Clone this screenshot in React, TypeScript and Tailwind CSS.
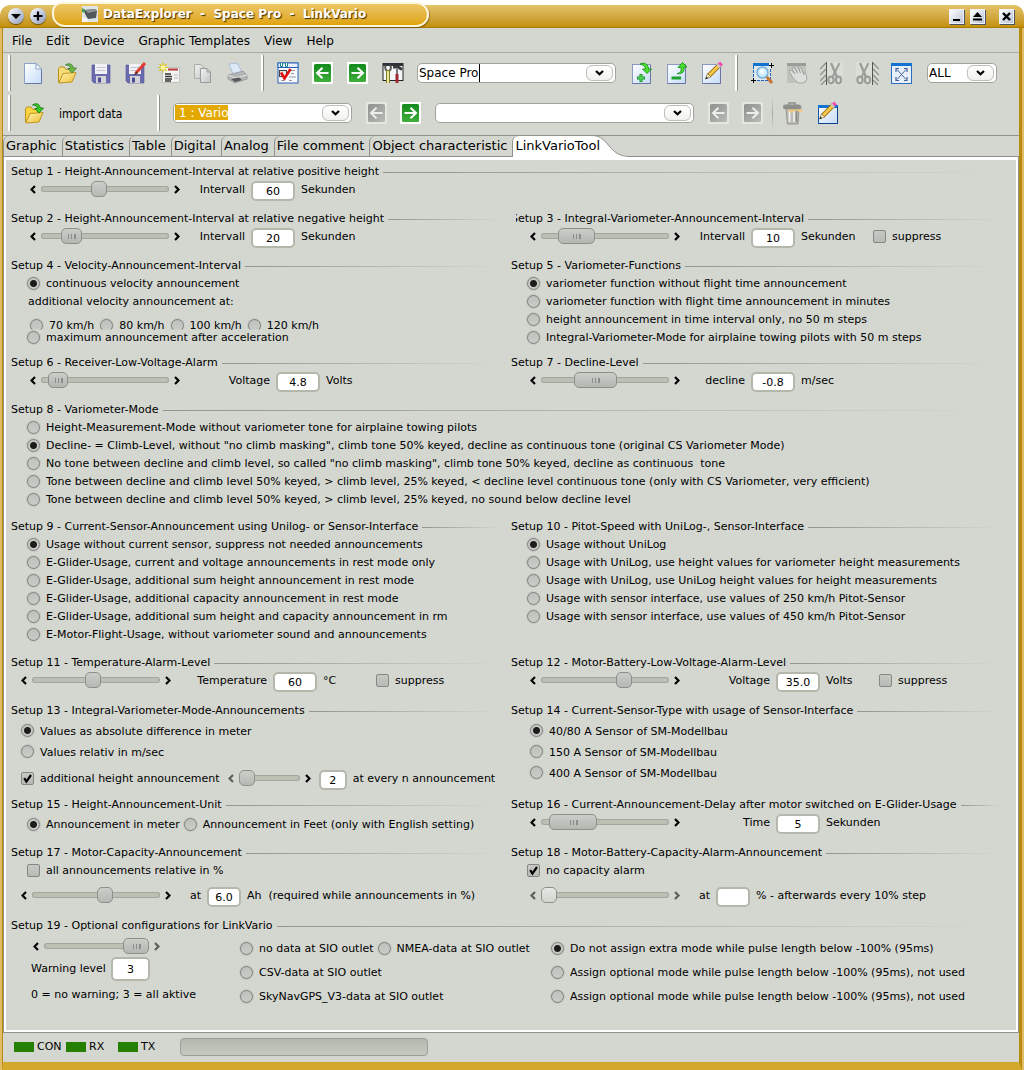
import React, { useId } from "react";

type Kids = { children?: React.ReactNode };

/* ---------- form pieces ---------- */

function Chevron({ dir, dim }: { dir: "left" | "right"; dim?: boolean }) {
  return (
    <svg width="6" height="9" viewBox="0 0 6 9" className="block">
      <path
        d={dir === "left" ? "M5 1 L1.5 4.5 L5 8" : "M1 1 L4.5 4.5 L1 8"}
        fill="none"
        stroke={dim ? "#5c5e5a" : "#000"}
        strokeWidth="2.2"
      />
    </svg>
  );
}

type SliderProps = {
  label: string;
  value: number;
  track?: string;
  thumb?: string;
  atStart?: boolean;
  atEnd?: boolean;
  disabled?: boolean;
};

const GRIP =
  "[&::-webkit-slider-thumb]:bg-[linear-gradient(90deg,transparent_0_1px,#8b8e88_1px_2px,transparent_2px_4px,#8b8e88_4px_5px,transparent_5px_7px,#8b8e88_7px_8px),linear-gradient(#cbcdc8,#b4b6b1)] [&::-webkit-slider-thumb]:bg-[length:9px_5px,100%_100%] [&::-webkit-slider-thumb]:bg-center [&::-webkit-slider-thumb]:bg-no-repeat";
const PLAIN = "[&::-webkit-slider-thumb]:w-4 [&::-webkit-slider-thumb]:bg-[linear-gradient(#cbcdc8,#b6b8b3)]";
const PALE = "[&::-webkit-slider-thumb]:w-4 [&::-webkit-slider-thumb]:bg-[linear-gradient(#e6e8e3,#d2d5ce)]";

function Slider({ label, value, track = "w-32", thumb = PLAIN, atStart, atEnd, disabled }: SliderProps) {
  return (
    <div className="flex h-[18px] shrink-0 items-center">
      <button type="button" aria-label={label + " down"} className="flex w-[11px] justify-start">
        <Chevron dir="left" dim={atStart || disabled} />
      </button>
      <input
        type="range"
        aria-label={label}
        min={0}
        max={1000}
        defaultValue={value}
        disabled={disabled}
        className={
          "h-[6px] appearance-none rounded-[3px] bg-[#bcbfb3] shadow-[inset_0_0_0_1px_#a3a69c] [&::-webkit-slider-thumb]:h-[16px] [&::-webkit-slider-thumb]:appearance-none [&::-webkit-slider-thumb]:rounded-[5px] [&::-webkit-slider-thumb]:border [&::-webkit-slider-thumb]:border-[#8d908a] " +
          track +
          " " +
          thumb
        }
      />
      <button type="button" aria-label={label + " up"} className="flex w-[11px] justify-end">
        <Chevron dir="right" dim={atEnd || disabled} />
      </button>
    </div>
  );
}

type RadioProps = { name: string; on?: boolean; flat?: boolean };

function Radio({ name, on, flat, children }: RadioProps & Kids) {
  return (
    <label className="flex h-[18px] items-center gap-1.5 whitespace-pre">
      <input
        type="radio"
        name={name}
        defaultChecked={on}
        className={
          "size-[13px] shrink-0 appearance-none rounded-full border border-[#7d807a] bg-[linear-gradient(#bfc1bc,#c9cbc6)] shadow-[0_0_0_1px_#c6c9c1] checked:bg-[radial-gradient(circle,#1c1d1b_0_3px,#c6c8c3_4px)] " +
          (flat ? "[clip-path:inset(-1px_-1px_2px_-1px)]" : "")
        }
      />
      <span className="pt-[2px]">{children}</span>
    </label>
  );
}

function Check({ on, children }: { on?: boolean } & Kids) {
  return (
    <label className="flex h-[18px] items-center gap-1.5 whitespace-pre">
      <span className="relative size-[13px] shrink-0">
        <input
          type="checkbox"
          defaultChecked={on}
          className="peer block size-[13px] appearance-none rounded-[2px] border border-[#858882] bg-[linear-gradient(#c6c8c3,#b8bab5)]"
        />
        <svg
          viewBox="0 0 13 13"
          className="pointer-events-none absolute inset-0 hidden size-[13px] peer-checked:block"
        >
          <path d="M3.2 6.2 L5.4 9.6 L10 3" fill="none" stroke="#000" strokeWidth="2.2" />
        </svg>
      </span>
      <span className="pt-[2px]">{children}</span>
    </label>
  );
}

type FieldProps = { label: string; value: string; labelW: string; unit: string; unitW?: string; inputW?: string };

function Field({ label, value, labelW, unit, unitW = "", inputW = "w-11" }: FieldProps) {
  const id = useId();
  return (
    <>
      <label htmlFor={id} className={"shrink-0 pt-[2px] text-right whitespace-pre " + labelW}>
        {label}
      </label>
      <input
        id={id}
        defaultValue={value}
        className={
          "mt-1 ml-1.5 h-5 shrink-0 rounded-[5px] border-2 border-[#b4b8ac] bg-white text-center text-[11px] text-black outline-none " +
          inputW
        }
      />
      <span className={"ml-1.5 shrink-0 pt-[2px] whitespace-pre " + unitW}>{unit}</span>
    </>
  );
}

function Group({ title, clip, full, children }: { title: string; clip?: boolean; full?: boolean } & Kids) {
  return (
    <section className={full ? "col-span-2" : ""}>
      <div className="flex h-[18px] items-center gap-1">
        <h2 className={"pt-[2px] whitespace-pre " + (clip ? "[clip-path:inset(0_0_0_5px)]" : "")}>{title}</h2>
        <div className="mt-[3px] mr-3 h-px flex-1 bg-linear-to-r from-[#92958e] to-[#92958e]/0" />
      </div>
      {children}
    </section>
  );
}

function Line({ pad = "pl-[19px]", children }: { pad?: string } & Kids) {
  return <div className={"flex h-[18px] items-center " + pad}>{children}</div>;
}

function Row({ h, children }: { h: string } & Kids) {
  return <div className={"grid grid-cols-2 " + h}>{children}</div>;
}

/* ---------- toolbar pieces ---------- */

const W = "w-[34px]";
const W2 = "w-[35px]";

function Tool({ label, w, children }: { label: string; w: string } & Kids) {
  return (
    <button type="button" aria-label={label} className={"flex h-6 shrink-0 items-center justify-center " + w}>
      {children}
    </button>
  );
}

function Sep() {
  return <div className="h-9 w-[3px] shrink-0 border-l-2 border-white bg-[#8f928b]" />;
}

function Svg({ children }: Kids) {
  return (
    <svg width="24" height="24" viewBox="0 0 24 24" className="block">
      {children}
    </svg>
  );
}

function Defs() {
  return (
    <svg width="0" height="0" className="absolute">
      <defs>
        <linearGradient id="page" x1="0" y1="0" x2="1" y2="1">
          <stop offset="0" stopColor="#fff" />
          <stop offset="1" stopColor="#c4dcf8" />
        </linearGradient>
        <linearGradient id="gray" x1="0" y1="0" x2="1" y2="1">
          <stop offset="0" stopColor="#f2f2f2" />
          <stop offset="1" stopColor="#c2c4c4" />
        </linearGradient>
        <linearGradient id="fold" x1="0" y1="0" x2="1" y2="1">
          <stop offset="0" stopColor="#fff3b8" />
          <stop offset="1" stopColor="#f0c030" />
        </linearGradient>
        <linearGradient id="green" x1="0" y1="0" x2="0" y2="1">
          <stop offset="0" stopColor="#128a1c" />
          <stop offset="1" stopColor="#3fae3a" />
        </linearGradient>
        <linearGradient id="off" x1="0" y1="0" x2="1" y2="1">
          <stop offset="0" stopColor="#8e908c" />
          <stop offset="1" stopColor="#b9bbb7" />
        </linearGradient>
      </defs>
    </svg>
  );
}

function PageIcon() {
  return (
    <Svg>
      <path d="M3.5 2.5 H15 L20.5 8 V22.5 H3.5 Z" fill="url(#page)" stroke="#8aa0c8" />
      <path d="M15 2.5 V8 H20.5 Z" fill="#fff" stroke="#8aa0c8" />
      <path d="M4 22.5 H20.5 V9" fill="none" stroke="#6878a8" />
    </Svg>
  );
}

function FolderIcon({ strong }: { strong?: boolean }) {
  return (
    <Svg>
      <path d="M3.5 21 V7.5 L5 6 H9 L11 8.5 H17.5 V12" fill={strong ? "#f9d440" : "#f7dc78"} stroke="#b98f1c" />
      <path d="M3.8 22 L8 12.5 L21 11.5 L17 21 Z" fill="url(#fold)" stroke="#c09420" />
      <path
        d="M10.5 4 C14 1.5 18 3 18.2 7 H21.5 L17 12 L12.8 7.5 H15.5 C15.5 5 13.5 4 10.5 4 Z"
        fill={strong ? "#37d026" : "#6fb843"}
        stroke={strong ? "#157a14" : "#44803a"}
        strokeWidth="0.9"
      />
    </Svg>
  );
}

function SaveIcon({ pen }: { pen?: boolean }) {
  return (
    <Svg>
      <path d="M3 4 H21 V22 H5 L3 20 Z" fill="#6a6cae" stroke="#5052a0" strokeWidth="0.6" />
      <rect x="6" y="3" width="12" height="10" fill="#f2f2f6" />
      <path d="M7.5 6.5 H16.5 M7.5 9.5 H16.5" stroke="#c4c4cc" />
      <rect x="7" y="15" width="10" height="7" fill="#d4d4d8" />
      <rect x="9" y="16.5" width="3" height="5" fill="#4b4d92" />
      {pen && (
        <>
          <path d="M22 2 L12.5 12.5" stroke="#e03c30" strokeWidth="3" />
          <path d="M13.5 10.5 L10.5 14.5 L14.5 12.5 Z" fill="#333" />
        </>
      )}
    </Svg>
  );
}

function CardIcon() {
  return (
    <Svg>
      <rect x="5.5" y="6.5" width="17" height="15" fill="#f4f4f2" stroke="#c0c0be" />
      <path d="M11 8.5 H21" stroke="#b83a3a" strokeWidth="2" />
      <path d="M8 13 H14 M8 15.5 H15 M8 18 H15 M8 20 H14" stroke="#333" strokeWidth="1.5" />
      <path d="M17 14 H21 M17 17 H21" stroke="#b4b4b4" />
      <path d="M6 1.500 V11.500 M1 6.500 H11 M2.500 3 L9.500 10 M9.500 3 L2.500 10" stroke="#d8c018" strokeWidth="1.200" />
      <circle cx="6" cy="6.5" r="2.2" fill="#fff8a0" />
    </Svg>
  );
}

function CopyIcon() {
  return (
    <Svg>
      <path d="M3.5 3.5 H10 L13.5 7 V17.5 H3.5 Z" fill="url(#gray)" stroke="#a8aaa8" />
      <path d="M9.5 7.5 H16 L19.5 11 V21.5 H9.5 Z" fill="url(#gray)" stroke="#989a98" />
      <path d="M16 7.5 V11 H19.5" fill="none" stroke="#989a98" />
    </Svg>
  );
}

function PrinterIcon() {
  return (
    <Svg>
      <path d="M4 3 L12 2 L17 11 L8 13 Z" fill="#dce9f7" stroke="#9fb6d4" strokeWidth="0.8" />
      <path d="M3 14 L18 10 L22 14 L22 18 L10 22 L3 18 Z" fill="#b4b5b6" stroke="#8d8e90" strokeWidth="0.7" />
      <path d="M3 14 L10 17 L22 14" fill="none" stroke="#e4e4e4" />
      <path d="M6 18 L14 16.5 L17 19 L10 21 Z" fill="#55575a" />
    </Svg>
  );
}

function ChecklistIcon() {
  return (
    <Svg>
      <rect x="2" y="2" width="20" height="20" fill="#f8fafd" stroke="#2a62b8" />
      <rect x="2" y="2" width="20" height="4.5" fill="#e6eefa" stroke="#2a62b8" />
      <path d="M4.5 2 V5.500 H6.500 V2 M9.500 2 V5.500 H11.500 V2" fill="#fff" stroke="#16888a" />
      <path d="M13 9.5 H19 M15 12.500 H18 M13 16 H20 M5 19.500 H8 M13 19.500 H16" stroke="#999" />
      <rect x="3.5" y="9.5" width="7" height="6" fill="#e6e6e6" stroke="#444" />
      <path d="M5 11.500 L8.500 17.500 L14.500 8" fill="none" stroke="#e01010" strokeWidth="2.6" />
    </Svg>
  );
}

function ArrowIcon({ dir, off }: { dir: "left" | "right"; off?: boolean }) {
  return (
    <Svg>
      <rect x="1" y="1" width="21" height="22" fill={off ? "#e4e6e1" : "#fff"} />
      <rect x="3" y="3" width="17" height="18" rx="1.5" fill={off ? "url(#off)" : "url(#green)"} />
      <path
        d={dir === "left" ? "M17.5 12 H6.5 M11.5 6.8 L6 12 L11.5 17.2" : "M5.5 12 H16.5 M11.5 6.8 L17 12 L11.5 17.2"}
        fill="none"
        stroke={off ? "#eceeea" : "#fff"}
        strokeWidth="2"
      />
    </Svg>
  );
}

function ToolsIcon() {
  return (
    <Svg>
      <rect x="2" y="2.5" width="20" height="17" fill="#f4f6f8" stroke="#222" />
      <rect x="2" y="2" width="20" height="3" fill="#2c3338" />
      <path d="M5 4 C3 7 5 10 7 10 C9.5 10 11 7 9 4" fill="none" stroke="#555" strokeWidth="2" />
      <path d="M7 9 V22" stroke="#7e7c2a" strokeWidth="4" />
      <path d="M7 10 V22" stroke="#ecea96" strokeWidth="2" />
      <path d="M12 6 H17 L21 8.5" fill="none" stroke="#3b3b3b" strokeWidth="3" />
      <path d="M16 8 V13" stroke="#777" strokeWidth="2" />
      <path d="M16 13 V22" stroke="#a02632" strokeWidth="3" />
    </Svg>
  );
}

function ObjectIcon({ kind }: { kind: "add" | "remove" | "edit" }) {
  return (
    <Svg>
      <rect x="2.5" y="3.5" width="18" height="19" fill="url(#page)" stroke="#8a98c4" />
      <path d="M2.5 22.5 H20.5 V4" fill="none" stroke="#6a74a8" />
      {kind === "add" && (
        <>
          <path d="M11 13 V21 M7 17 H15" stroke="#148a2c" strokeWidth="3" />
          <path d="M11 13.8 V20.2 M7.8 17 H14.2" stroke="#50dc50" strokeWidth="1.4" />
          <path d="M10 3 C14 1 18.5 3 18.5 8 H21.5 L17 12.5 L12.5 8 H15.5 C15.5 5 13 4 10 3 Z" fill="#4be02c" stroke="#16901c" strokeWidth="0.9" />
        </>
      )}
      {kind === "remove" && (
        <>
          <path d="M6.5 17 H16" stroke="#1da02c" strokeWidth="3" />
          <path d="M12 12.5 C16 12.5 16.5 9 16 6.5 H13 L17.5 1.5 L22 6 H19 C19.5 10 18 13.5 12 12.5 Z" fill="#4be02c" stroke="#16901c" strokeWidth="0.9" />
        </>
      )}
      {kind === "edit" && <Pencil />}
    </Svg>
  );
}

function Pencil() {
  return (
    <>
      <path d="M19.5 4 L9 14.5" stroke="#a07014" strokeWidth="4.6" />
      <path d="M19.5 4 L9 14.5" stroke="#f6c84c" strokeWidth="3" />
      <path d="M18 5.5 L19.5 4" stroke="#c8c8d0" strokeWidth="4.2" />
      <path d="M19.5 4 L21.5 2" stroke="#f04cb0" strokeWidth="4" />
      <path d="M7.5 12.5 L5.5 18 L11 16 Z" fill="#f6e2b4" stroke="#6a5a30" strokeWidth="0.6" />
      <path d="M6.5 15.5 L5.3 18.2 L8 17.2 Z" fill="#222" />
    </>
  );
}

function ZoomIcon() {
  return (
    <Svg>
      <rect x="3" y="2" width="18" height="17" fill="#dfe8ee" />
      <rect x="3" y="2" width="16" height="3" fill="#1274d0" />
      <path d="M3.5 5 V17 M7 19.5 H21 M20.5 8 V19" stroke="#1c66c0" strokeDasharray="3 1" />
      <path d="M19 4.5 H24 M21.5 2 V7 M1 19.5 H6 M3.5 17 V22" stroke="#000" />
      <path d="M16 15 L22 22" stroke="#c87434" strokeWidth="3" />
      <circle cx="12.500" cy="11.5" r="5.500" fill="#c8ecfc" stroke="#7ab0d8" strokeWidth="1.5" />
      <circle cx="12" cy="10.5" r="2.5" fill="#f2fcff" />
    </Svg>
  );
}

function HandIcon() {
  return (
    <Svg>
      <rect x="2" y="2" width="19" height="20" fill="#c0c2bd" />
      <rect x="2" y="2" width="19" height="3" fill="#9b9d99" />
      <path
        d="M6 9 L10 13 L7 7 Q8 5.5 9.5 7 L12.5 12 L10 5.5 Q11.5 4 12.5 6 L15.5 12 L13.500 6 Q15 5 16 7 L19 14 L19 11 Q21 10.5 21 13 L22 18 L19 22 H13 L8 17 L4.5 11 Q4 9 6 9 Z"
        fill="#dcdeda"
        stroke="#9fa19d"
        strokeWidth="0.9"
      />
    </Svg>
  );
}

function CutIcon({ side }: { side: "left" | "right" }) {
  const left = side === "left";
  return (
    <Svg>
      <rect x={left ? 7 : 1} y="1" width="16" height="23" fill="#dcdfd8" />
      <path
        d={left ? "M0 8 L6 2 M0 14 L6 8 M0 20 L6 14 M1 24 L6 19" : "M18 2 L24 8 M18 8 L24 14 M18 14 L24 20 M18 19 L23 24"}
        stroke="#8a8c88"
        strokeWidth="1.2"
      />
      <path d={left ? "M6.5 1 V24" : "M17.5 1 V24"} stroke="#555" />
      <g transform={left ? "translate(6 0)" : "translate(0 0)"} fill="none" stroke="#9c9e9a">
        <path d="M5 2 L11 16" strokeWidth="2.4" />
        <path d="M13.5 2 L6.5 16" strokeWidth="2" />
        <ellipse cx="5" cy="19" rx="2.6" ry="3.3" strokeWidth="2.2" />
        <ellipse cx="12.500" cy="19" rx="2.6" ry="3.3" strokeWidth="2.2" />
      </g>
    </Svg>
  );
}

function FitIcon() {
  return (
    <Svg>
      <rect x="1.5" y="2.5" width="20" height="20" fill="#e6effa" stroke="#2a6cc0" />
      <rect x="1" y="2" width="21" height="3" fill="#1274d0" />
      <path d="M7 8.5 L16 18.5 M16 8.5 L7 18.5" stroke="#455f90" />
      <path d="M6 11 V7.5 H9 M14 7.5 H17 V11 M17 16 V19.5 H14 M9 19.5 H6 V16" fill="none" stroke="#455f90" strokeWidth="1.2" />
    </Svg>
  );
}

function TrashIcon() {
  return (
    <Svg>
      <path d="M5 8 H18 L17 23 H6.5 Z" fill="#bcbcb8" stroke="#94948f" />
      <path d="M8.5 10 V21 M13 10 V21" stroke="#ececea" strokeWidth="1.8" />
      <path d="M15.5 10 V21" stroke="#8a8682" strokeWidth="1.5" />
      <path d="M2 4.500 L4 3.500 H18 L20 4.500 L20.500 8 H2.500 Z" fill="#8f8f8b" />
      <path d="M8 4 V2 H14 V4" fill="none" stroke="#8c8c88" strokeWidth="1.5" />
      <path d="M6 8.500 H22 L20 11.500 L15 9.500 L10 12 Z" fill="#f0c880" />
    </Svg>
  );
}

function NoteIcon() {
  return (
    <Svg>
      <rect x="2.5" y="4.5" width="19" height="18" fill="url(#page)" stroke="#1858a8" />
      <rect x="2" y="4" width="20" height="3" fill="#1274d0" />
      <path d="M2.5 22.5 H21.5 V6" fill="none" stroke="#10408c" />
      <g transform="translate(-2 0)">
        <Pencil />
      </g>
    </Svg>
  );
}

function DropFace() {
  return (
    <span className="pointer-events-none absolute top-[2px] right-[3px] bottom-[2px] flex w-[27px] items-center justify-center rounded-[6px] border border-[#bcc0b6] bg-linear-to-b from-white to-[#f1f2ef]">
      <svg width="9" height="6" viewBox="0 0 9 6">
        <path d="M1 1 L4.5 4.3 L8 1" fill="none" stroke="#000" strokeWidth="2.2" />
      </svg>
    </span>
  );
}

const BOX = "h-5 w-full appearance-none rounded-[5px] border border-[#a0a49a] bg-white text-[12px] outline-none";

/* ---------- page ---------- */

const MENU = ["File", "Edit", "Device", "Graphic Templates", "View", "Help"];
const TABS = ["Graphic", "Statistics", "Table", "Digital", "Analog", "File comment", "Object characteristic"];

function TitleBar() {
  return (
    <header className="relative flex h-7 items-start bg-white">
      <div className="absolute inset-x-0 top-[5px] bottom-0 rounded-t-[10px] border-b border-[#a87c00] bg-linear-to-b from-[#e3c468] to-[#c49000]" />
      <div className="relative flex h-7 w-full items-center">
        <div className="flex w-[52px] gap-[6px] pt-1 pl-2">
          {["Window menu", "Keep on all desktops"].map((name, i) => (
            <button
              key={name}
              type="button"
              aria-label={name}
              className="flex size-4 items-center justify-center rounded-full bg-linear-to-br from-white to-[#8d9cbc] shadow-[0_1px_1px_#00000080]"
            >
              <svg width="10" height="10" viewBox="0 0 10 10">
                {i === 0 ? <path d="M0 3 H10 L5 8 Z" /> : <path d="M5 0.5 V9.5 M0.5 5 H9.5" stroke="#000" strokeWidth="2.2" />}
              </svg>
            </button>
          ))}
        </div>
        <div className="flex h-[25px] w-[377px] items-center gap-[5px] rounded-[13px] rounded-tl-[10px] border-2 border-[#fdf6df] bg-linear-to-b from-[#ecc662] to-[#dfa400] pl-[28px] shadow-[1px_1px_1px_#00000050]">
          <svg width="16" height="16" viewBox="0 0 16 16" className="shrink-0">
            <rect width="16" height="16" fill="#dfe5e6" />
            <path d="M0 2 L4 4 L3 7 L0 6 Z" fill="#4d9b58" />
            <path d="M3 4 L13 3 L15 5 L14 12 L6 13 L3 8 Z" fill="#52585a" />
            <path d="M3 4 L13 3 L15 5 L6 7 Z" fill="#8b9294" />
            <path d="M0 11 L6 13 L5 16 H0 Z" fill="#f4f6f6" />
          </svg>
          <h1 className="text-[12px] font-bold whitespace-pre text-white [text-shadow:1px_1px_1px_#3a2c00]">
            {"DataExplorer  -  Space Pro  -  LinkVario"}
          </h1>
        </div>
        <div className="flex-1" />
        <div className="flex items-center gap-[6px] pt-1 pr-[10px]">
          {["Minimize", "Maximize", "Close"].map((name, i) => (
            <button
              key={name}
              type="button"
              aria-label={name}
              className={
                "flex size-[15px] items-center justify-center border border-[#eef2f8] bg-linear-to-br from-white to-[#b9c4d6] shadow-[1px_1px_0_#4a5568] " +
                (i === 2 ? "ml-2" : "")
              }
            >
              <svg width="11" height="11" viewBox="0 0 11 11">
                {i === 0 && <path d="M2 8 H9 V10 H2 Z" />}
                {i === 1 && <path d="M5.5 1 L10 6 H1 Z M1 7.5 H10 V9.5 H1 Z" />}
                {i === 2 && <path d="M2 2 L9 9 M9 2 L2 9" stroke="#000" strokeWidth="2.4" />}
              </svg>
            </button>
          ))}
        </div>
      </div>
    </header>
  );
}

function Toolbars() {
  return (
    <>
      <div className="flex h-10 items-center pl-[5px]">
        <Sep />
        <div className="flex pl-[5px]">
          <Tool label="New" w={W}><PageIcon /></Tool>
          <Tool label="Open" w={W}><FolderIcon /></Tool>
          <Tool label="Save" w={W}><SaveIcon /></Tool>
          <Tool label="Save as" w={W}><SaveIcon pen /></Tool>
          <Tool label="Settings" w={W}><CardIcon /></Tool>
          <Tool label="Copy" w={W}><CopyIcon /></Tool>
          <Tool label="Print" w={W}><PrinterIcon /></Tool>
        </div>
        <div className="w-[7px]" />
        <Sep />
        <div className="flex pl-[6px]">
          <Tool label="Select device" w={W2}><ChecklistIcon /></Tool>
          <Tool label="Previous device" w={W2}><ArrowIcon dir="left" /></Tool>
          <Tool label="Next device" w={W2}><ArrowIcon dir="right" /></Tool>
          <Tool label="Device tools" w={W2}><ToolsIcon /></Tool>
        </div>
        <div className="relative ml-[7px] w-[199px]">
          <input aria-label="Object" defaultValue="Space Pro" className={BOX + " block pl-[1px]"} />
          <span className="absolute top-px left-[62px] h-[18px] w-px bg-black" />
          <DropFace />
        </div>
        <div className="flex pl-2">
          <Tool label="Add object" w={W2}><ObjectIcon kind="add" /></Tool>
          <Tool label="Remove object" w={W2}><ObjectIcon kind="remove" /></Tool>
          <Tool label="Edit object" w={W2}><ObjectIcon kind="edit" /></Tool>
        </div>
        <div className="w-1.5" />
        <Sep />
        <div className="flex pl-[6px]">
          <Tool label="Zoom" w={W2}><ZoomIcon /></Tool>
          <Tool label="Pan" w={W2}><HandIcon /></Tool>
          <Tool label="Cut left" w={W2}><CutIcon side="left" /></Tool>
          <Tool label="Cut right" w={W2}><CutIcon side="right" /></Tool>
          <Tool label="Fit window" w={W2}><FitIcon /></Tool>
        </div>
        <div className="relative ml-2 w-[70px]">
          <select aria-label="Points" className={BOX + " block pl-[1px]"}>
            <option>ALL</option>
          </select>
          <DropFace />
        </div>
      </div>
      <div className="flex h-10 items-center pl-[5px]">
        <Sep />
        <button
          type="button"
          className="flex w-[146px] items-center gap-[13px] pl-[11px] font-['DejaVu_Sans_Condensed','DejaVu_Sans',sans-serif] text-[12px]"
        >
          <FolderIcon strong />
          <span className="pt-[2px]">import data</span>
        </button>
        <Sep />
        <div className="relative ml-[13px] w-[179px]">
          <select
            aria-label="Channel"
            className={BOX + " block bg-[linear-gradient(#e3a900,#e3a900)] bg-[length:53px_15px] bg-[position:1px_1px] bg-no-repeat pl-[5px] text-white"}
          >
            <option>1 : Vario</option>
          </select>
          <DropFace />
        </div>
        <div className="flex pl-2">
          <Tool label="Previous channel" w={W}><ArrowIcon dir="left" off /></Tool>
          <Tool label="Next channel" w={W}><ArrowIcon dir="right" /></Tool>
        </div>
        <div className="relative ml-[7px] w-[259px]">
          <select aria-label="Record" className={BOX + " block"}>
            <option></option>
          </select>
          <DropFace />
        </div>
        <div className="flex pl-2">
          <Tool label="Previous record" w={W}><ArrowIcon dir="left" off /></Tool>
          <Tool label="Next record" w={W}><ArrowIcon dir="right" off /></Tool>
        </div>
        <div className="ml-[2px] h-8 w-px bg-linear-to-b from-[#a4a79f]/0 via-[#a4a79f] to-[#a4a79f]/0" />
        <div className="flex pl-[2px]">
          <Tool label="Delete record" w={W2}><TrashIcon /></Tool>
          <Tool label="Edit comment" w={W2}><NoteIcon /></Tool>
        </div>
      </div>
    </>
  );
}

function Tabs() {
  return (
    <nav role="tablist" className="mt-[2px] flex h-[22px] border-y border-[#8f928a] text-[13px]">
      {TABS.map((t) => (
        <button
          key={t}
          type="button"
          role="tab"
          aria-selected="false"
          className="h-5 shrink-0 rounded-tl-[6px] border-l border-[#8f928a] pr-[5px] pl-[2px] leading-5 whitespace-pre"
        >
          {t}
        </button>
      ))}
      <button
        type="button"
        role="tab"
        aria-selected="true"
        className="flex h-[21px] shrink-0 rounded-tl-[6px] border-l border-[#8f928a] bg-white pl-[2px] leading-5"
      >
        <span className="relative z-10 -mr-[7px]">LinkVarioTool</span>
        <svg width="36" height="21" viewBox="0 0 36 21" className="block bg-[#d4d7d0]">
          <path d="M0 0 C16 0 15 20 36 20 V21 H0 Z" fill="#fff" />
          <path d="M0 -0.5 C16 0 15 20 36 20.5" fill="none" stroke="#8f928a" />
        </svg>
      </button>
    </nav>
  );
}

const TOWING = "Assign optional mode while pulse length below -100% (95ms), not used";

function SetupPanel() {
  return (
    <main className="border-r border-b border-l border-[#8f928a]">
      <div className="border-2 border-t-3 border-white px-[5px] pt-[2px]">
        <Row h="min-h-[47px]">
          <Group full title="Setup 1 - Height-Announcement-Interval at relative positive height">
            <Line>
              <Slider label="Setup 1 interval" value={446} />
              <Field label="Intervall" value="60" labelW="w-[65px]" unit="Sekunden" />
            </Line>
          </Group>
        </Row>

        <Row h="min-h-[47px]">
          <Group title="Setup 2 - Height-Announcement-Interval at relative negative height">
            <Line>
              <Slider label="Setup 2 interval" value={187} thumb={GRIP + " [&::-webkit-slider-thumb]:w-[21px]"} />
              <Field label="Intervall" value="20" labelW="w-[65px]" unit="Sekunden" />
            </Line>
          </Group>
          <Group clip title="Setup 3 - Integral-Variometer-Announcement-Interval">
            <Line>
              <Slider label="Setup 3 interval" value={187} thumb={GRIP + " [&::-webkit-slider-thumb]:w-[37px]"} />
              <Field label="Intervall" value="10" labelW="w-[65px]" unit="Sekunden" unitW="w-[72px]" />
              <Check>suppress</Check>
            </Line>
          </Group>
        </Row>

        <Row h="min-h-[97px]">
          <Group title="Setup 4 - Velocity-Announcement-Interval">
            <div className="pl-4">
              <Radio name="s4" on>continuous velocity announcement</Radio>
              <p className="flex h-[18px] items-center pt-[2px] pl-px">additional velocity announcement at:</p>
              <div className="flex h-[18px] gap-[6px] pt-1.5 pl-[3px]">
                <Radio flat name="s4b">70 km/h</Radio>
                <Radio flat name="s4b">80 km/h</Radio>
                <Radio flat name="s4b">100 km/h</Radio>
                <Radio flat name="s4b">120 km/h</Radio>
              </div>
              <Radio name="s4">maximum announcement after acceleration</Radio>
            </div>
          </Group>
          <Group title="Setup 5 - Variometer-Functions">
            <div className="pl-4">
              <Radio name="s5" on>variometer function without flight time announcement</Radio>
              <Radio name="s5">variometer function with flight time announcement in minutes</Radio>
              <Radio name="s5">height announcement in time interval only, no 50 m steps</Radio>
              <Radio name="s5">Integral-Variometer-Mode for airplaine towing pilots with 50 m steps</Radio>
            </div>
          </Group>
        </Row>

        <Row h="min-h-[47px]">
          <Group title="Setup 6 - Receiver-Low-Voltage-Alarm">
            <Line>
              <Slider label="Setup 6 voltage" value={65} thumb={GRIP + " [&::-webkit-slider-thumb]:w-5"} />
              <Field label="Voltage" value="4.8" labelW="w-[90px]" unit="Volts" />
            </Line>
          </Group>
          <Group title="Setup 7 - Decline-Level">
            <Line>
              <Slider label="Setup 7 decline" value={388} thumb={GRIP + " [&::-webkit-slider-thumb]:w-[43px]"} />
              <Field label="decline" value="-0.8" labelW="w-[65px]" unit="m/sec" />
            </Line>
          </Group>
        </Row>

        <Row h="min-h-[117px]">
          <Group full title="Setup 8 - Variometer-Mode">
            <div className="pl-4">
              <Radio name="s8">Height-Measurement-Mode without variometer tone for airplaine towing pilots</Radio>
              <Radio name="s8" on>{'Decline- = Climb-Level, without "no climb masking", climb tone 50% keyed, decline as continuous tone (original CS Variometer Mode)'}</Radio>
              <Radio name="s8">{'No tone between decline and climb level, so called "no climb masking", climb tone 50% keyed, decline as continuous  tone'}</Radio>
              <Radio name="s8">{"Tone between decline and climb level 50% keyed, > climb level, 25% keyed, < decline level continuous tone (only with CS Variometer, very efficient)"}</Radio>
              <Radio name="s8">{"Tone between decline and climb level 50% keyed, > climb level, 25% keyed, no sound below decline level"}</Radio>
            </div>
          </Group>
        </Row>

        <Row h="min-h-[136px]">
          <Group title="Setup 9 - Current-Sensor-Announcement using Unilog- or Sensor-Interface">
            <div className="pl-4">
              <Radio name="s9" on>Usage without current sensor, suppress not needed announcements</Radio>
              <Radio name="s9">E-Glider-Usage, current and voltage announcements in rest mode only</Radio>
              <Radio name="s9">E-Glider-Usage, additional sum height announcement in rest mode</Radio>
              <Radio name="s9">E-Glider-Usage, additional capacity announcement in rest mode</Radio>
              <Radio name="s9">E-Glider-Usage, additional sum height and capacity announcement in rm</Radio>
              <Radio name="s9">E-Motor-Flight-Usage, without variometer sound and announcements</Radio>
            </div>
          </Group>
          <Group title="Setup 10 - Pitot-Speed with UniLog-, Sensor-Interface">
            <div className="pl-4">
              <Radio name="s10" on>Usage without UniLog</Radio>
              <Radio name="s10">Usage with UniLog, use height values for variometer height measurements</Radio>
              <Radio name="s10">Usage with UniLog, use UniLog height values for height measurements</Radio>
              <Radio name="s10">Usage with sensor interface, use values of 250 km/h Pitot-Sensor</Radio>
              <Radio name="s10">Usage with sensor interface, use values of 450 km/h Pitot-Sensor</Radio>
            </div>
          </Group>
        </Row>

        <Row h="min-h-12">
          <Group title="Setup 11 - Temperature-Alarm-Level">
            <Line pad="pl-[10px]">
              <Slider label="Setup 11 temperature" value={473} />
              <Field label="Temperature" value="60" labelW="w-24" unit="°C" unitW="w-[53px]" />
              <Check>suppress</Check>
            </Line>
          </Group>
          <Group title="Setup 12 - Motor-Battery-Low-Voltage-Alarm-Level">
            <Line>
              <Slider label="Setup 12 voltage" value={670} />
              <Field label="Voltage" value="35.0" labelW="w-[90px]" unit="Volts" unitW="w-[53px]" />
              <Check>suppress</Check>
            </Line>
          </Group>
        </Row>

        <Row h="min-h-[94px]">
          <Group title="Setup 13 - Integral-Variometer-Mode-Announcements">
            <div className="pt-px pl-[10px]">
              <div className="flex h-[21px] items-center"><Radio name="s13" on>Values as absolute difference in meter</Radio></div>
              <div className="flex h-[21px] items-center"><Radio name="s13">Values relativ in m/sec</Radio></div>
              <div className="flex h-8 items-center">
                <Check on>additional height announcement</Check>
                <div className="w-2" />
                <Slider label="Setup 13 count" value={0} track="w-[61px]" atStart />
                <Field label="" value="2" labelW="w-[2px]" inputW="w-7" unit="at every n announcement" />
              </div>
            </div>
          </Group>
          <Group title="Setup 14 - Current-Sensor-Type with usage of Sensor-Interface">
            <div className="pt-px pl-[19px]">
              <div className="flex h-[21px] items-center"><Radio name="s14" on>40/80 A Sensor of SM-Modellbau</Radio></div>
              <div className="flex h-[21px] items-center"><Radio name="s14">150 A Sensor of SM-Modellbau</Radio></div>
              <div className="flex h-[21px] items-center"><Radio name="s14">400 A Sensor of SM-Modellbau</Radio></div>
            </div>
          </Group>
        </Row>

        <Row h="min-h-12">
          <Group title="Setup 15 - Height-Announcement-Unit">
            <div className="flex gap-1 pt-[2px] pl-4">
              <Radio name="s15" on>Announcement in meter</Radio>
              <Radio name="s15">Announcement in Feet (only with English setting)</Radio>
            </div>
          </Group>
          <Group title="Setup 16 - Current-Announcement-Delay after motor switched on E-Glider-Usage">
            <Line>
              <Slider label="Setup 16 delay" value={100} thumb={GRIP + " [&::-webkit-slider-thumb]:w-12"} />
              <Field label="Time" value="5" labelW="w-[90px]" unit="Sekunden" />
            </Line>
          </Group>
        </Row>

        <Row h="min-h-[73px]">
          <Group title="Setup 17 - Motor-Capacity-Announcement">
            <Line pad="pl-4"><Check>all announcements relative in %</Check></Line>
            <div className="pt-[7px]">
              <Line pad="pl-[10px]">
                <Slider label="Setup 17 capacity" value={580} />
                <Field label="at" value="6.0" labelW="w-[30px]" inputW="w-[34px]" unit="Ah  (required while announcements in %)" />
              </Line>
            </div>
          </Group>
          <Group title="Setup 18 - Motor-Battery-Capacity-Alarm-Announcement">
            <Line pad="pl-4"><Check on>no capacity alarm</Check></Line>
            <div className="pt-[7px]">
              <Line>
                <Slider label="Setup 18 capacity" value={0} thumb={PALE} disabled />
                <Field label="at" value="" labelW="w-[30px]" inputW="w-[34px]" unit="% - afterwards every 10% step" />
              </Line>
            </div>
          </Group>
        </Row>

        <Row h="min-h-[114px]">
          <Group full title="Setup 19 - Optional configurations for LinkVario">
            <div className="flex">
              <div className="w-[229px] pt-[3px] pl-5">
                <div className="pl-[2px]">
                  <Slider label="Setup 19 warning level" value={1000} track="w-[105px]" thumb={GRIP + " [&::-webkit-slider-thumb]:w-[26px]"} atEnd />
                </div>
                <div className="flex h-[27px] items-center gap-[5px] pt-px">
                  <label htmlFor="warn" className="w-[75px] whitespace-pre">Warning level</label>
                  <input id="warn" defaultValue="3" className="h-6 w-[39px] rounded-[5px] border-2 border-[#b4b8ac] bg-white text-center outline-none" />
                </div>
                <p className="pt-1 leading-[18px]">0 = no warning; 3 = all aktive</p>
              </div>
              <div className="flex w-[311px] flex-col gap-1.5 pt-[5px]">
                <div className="flex gap-1">
                  <Radio name="s19">no data at SIO outlet</Radio>
                  <Radio name="s19">NMEA-data at SIO outlet</Radio>
                </div>
                <Radio name="s19">CSV-data at SIO outlet</Radio>
                <Radio name="s19">SkyNavGPS_V3-data at SIO outlet</Radio>
              </div>
              <div className="flex flex-col gap-1.5 pt-[5px]">
                <Radio name="s19m" on>Do not assign extra mode while pulse length below -100% (95ms)</Radio>
                <Radio name="s19m">{TOWING}</Radio>
                <Radio name="s19m">{TOWING}</Radio>
              </div>
            </div>
          </Group>
        </Row>
      </div>
    </main>
  );
}

export default function App() {
  return (
    <div className="min-w-[1024px] bg-white font-['DejaVu_Sans',sans-serif] text-[11px] leading-[14px] text-black">
      <Defs />
      <TitleBar />
      <div className="border-x-2 border-[#e0bd62]">
        <div className="border-r-[3px] border-b-8 border-l border-[#b88a10] border-b-[#d2a92c] bg-[#d4d7d0]">
          <nav className="flex h-[25px] items-center gap-[14px] border-b border-[#a9aca4] pt-[2px] pl-[9px] text-[12px]">
            {MENU.map((m) => (
              <button key={m} type="button" className="whitespace-pre">{m}</button>
            ))}
          </nav>
          <Toolbars />
          <Tabs />
          <SetupPanel />
          <footer className="flex h-[29px] items-center pb-[2px] pl-[11px]">
            {["CON", "RX", "TX"].map((s) => (
              <div key={s} className="flex w-[52px] items-center gap-[3px]">
                <span className="h-[10px] w-5 bg-[#258000]" />
                {s}
              </div>
            ))}
            <div
              role="progressbar"
              aria-label="Progress"
              className="ml-[10px] h-[18px] w-[248px] rounded-[4px] border border-[#9a9d95] bg-linear-to-b from-[#b4b7ad] to-[#c6c9be]"
            />
          </footer>
        </div>
      </div>
    </div>
  );
}
